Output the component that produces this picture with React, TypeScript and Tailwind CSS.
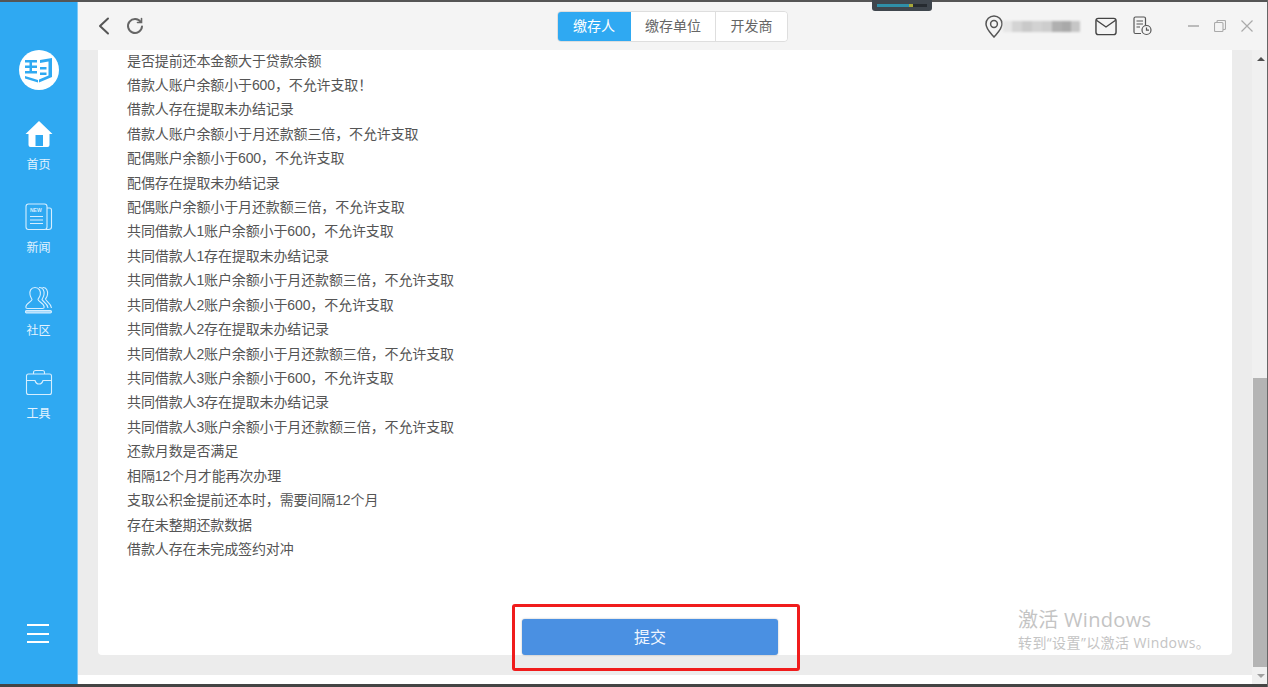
const font = "font-['Liberation_Sans','Noto_Sans_CJK_SC',sans-serif]";

const rules = [
  "是否提前还本金额大于贷款余额",
  "借款人账户余额小于600，不允许支取！",
  "借款人存在提取未办结记录",
  "借款人账户余额小于月还款额三倍，不允许支取",
  "配偶账户余额小于600，不允许支取",
  "配偶存在提取未办结记录",
  "配偶账户余额小于月还款额三倍，不允许支取",
  "共同借款人1账户余额小于600，不允许支取",
  "共同借款人1存在提取未办结记录",
  "共同借款人1账户余额小于月还款额三倍，不允许支取",
  "共同借款人2账户余额小于600，不允许支取",
  "共同借款人2存在提取未办结记录",
  "共同借款人2账户余额小于月还款额三倍，不允许支取",
  "共同借款人3账户余额小于600，不允许支取",
  "共同借款人3存在提取未办结记录",
  "共同借款人3账户余额小于月还款额三倍，不允许支取",
  "还款月数是否满足",
  "相隔12个月才能再次办理",
  "支取公积金提前还本时，需要间隔12个月",
  "存在未整期还款数据",
  "借款人存在未完成签约对冲",
];

function HomeIcon() {
  return (
    <svg width="28" height="28" viewBox="0 0 28 28" fill="#fff" fillRule="evenodd">
      <path d="M14 1 L27.5 14 L24.5 14 L24.5 25 Q24.5 27 22.5 27 L5.5 27 Q3.5 27 3.5 25 L3.5 14 L0.5 14 Z M10.5 15 L10.5 26 L18 26 L18 15 Z" />
    </svg>
  );
}

function NewsIcon() {
  return (
    <svg width="28" height="28" viewBox="0 0 28 28" fill="none" stroke="#d6eeff" strokeWidth="1.1">
      <rect x="1" y="1" width="21" height="25.5" rx="2.5" />
      <path d="M22 5 h2.5 q2 0 2 2 v17 q0 2.5 -3 2.5 h-3" />
      <path d="M5 13.5 h13 M5 17 h13 M5 20.5 h13" />
      <text x="5" y="9" fontSize="5" fontWeight="700" fill="#d6eeff" stroke="none" fontFamily="Liberation Sans">NEW</text>
    </svg>
  );
}

function PeopleIcon() {
  return (
    <svg width="28" height="28" viewBox="0 0 28 28" fill="none" stroke="#d6eeff" strokeWidth="1.1">
      <path d="M10 1.5 C5.5 1.5 4.5 5.5 5 8.5 C5.3 11 6.5 12 7 13.5 C7 15.5 1 17 0.8 21 Q0.8 22.5 2.5 22.5 L17.5 22.5 Q19.2 22.5 19.2 21 C19 17 13 15.5 13 13.5 C13.5 12 15 11 15.3 8.5 C15.8 5.5 14.5 1.5 10 1.5 Z" />
      <path d="M14 1.5 C18 1 19.5 5 19 8.5 C18.7 11 17.5 12 17 13.5 C17.5 15.5 22.5 17 23 22" />
      <path d="M17.5 1.5 C21.5 1 23 5 22.5 8.5 C22.2 11 21 12 20.5 13 C21 15.5 26 17 26.5 22" />
      <rect x="0.5" y="24.5" width="26" height="2.5" rx="1.25" fill="#d6eeff" fillOpacity="0.7" />
    </svg>
  );
}

function CaseIcon() {
  return (
    <svg width="28" height="28" viewBox="0 0 28 28" fill="none" stroke="#d6eeff" strokeWidth="1.1">
      <rect x="1.5" y="5" width="25" height="20.5" rx="2" />
      <path d="M8.5 5 V3.5 Q8.5 1.5 10.5 1.5 H17.5 Q19.5 1.5 19.5 3.5 V5" />
      <path d="M1.5 11.5 H10 Q11 15 14 15 Q17 15 18 11.5 H26.5" />
    </svg>
  );
}

function NavItem({ icon, label }: { icon: React.ReactNode; label: string }) {
  return (
    <div className="flex h-[83px] flex-col items-center">
      <div className="flex h-[28px] items-center justify-center">{icon}</div>
      <span className="mt-[9px] text-[12px] leading-[16px] text-[#e3f3ff]">{label}</span>
    </div>
  );
}

function Sidebar() {
  return (
    <aside className="flex w-[78px] shrink-0 flex-col items-center border-r border-[#7cc8f6] bg-[#2fa9f2]">
      {/* logo */}
      <div className="mt-[48px] flex h-[40px] w-[40px] items-center justify-center rounded-full bg-white">
        <svg width="29" height="26" viewBox="0 0 29 26" fill="#2fa9f2">
          <path d="M1 3 H13 V5.5 H1 Z M1 8.5 H13 V11 H1 Z M1 14 H13 V16.5 H1 Z M5.5 3 H8 V16.5 H5.5 Z" />
          <path d="M1 19 L14 23 L14 25.5 L1 21.5 Z" />
          <path d="M16 3 L28 1 V20 L15 25.5 V22.5 L24.5 18.5 V4.5 L16 6 Z M16 10 H22.5 V12.5 H16 Z M16 15.5 H22.5 V18 H16 Z" />
        </svg>
      </div>
      <div className="mt-[30px] flex flex-col">
        <NavItem icon={<HomeIcon />} label="首页" />
        <NavItem icon={<NewsIcon />} label="新闻" />
        <NavItem icon={<PeopleIcon />} label="社区" />
        <NavItem icon={<CaseIcon />} label="工具" />
      </div>
      <div className="mt-auto mr-[2px] mb-[41px] flex w-[22px] flex-col gap-[6.5px]">
        <div className="h-[2px] bg-white" />
        <div className="h-[2px] bg-white" />
        <div className="h-[2px] bg-white" />
      </div>
    </aside>
  );
}

function Header() {
  return (
    <header className="flex h-[48px] shrink-0 items-center bg-[#f4f4f4] pl-[19px]">
      <svg width="14" height="18" viewBox="0 0 14 18" fill="none" stroke="#555" strokeWidth="2" strokeLinecap="round" strokeLinejoin="round">
        <path d="M11 1.5 L3 9 L11 16.5" />
      </svg>
      <svg className="ml-[15px]" width="18" height="18" viewBox="0 0 18 18" fill="none" stroke="#666" strokeWidth="2" strokeLinecap="round">
        <path d="M14.8 5 A7 7 0 1 0 16 9.5" />
        <path d="M15.5 1.5 V5.5 H11.5" strokeWidth="1.6" />
      </svg>

      <div className="ml-[413px] flex h-[31px] overflow-hidden rounded-[4px] border border-[#dedede] text-[14px] text-[#666]">
        <div className="-m-px flex w-[74px] items-center justify-center bg-[#2fa9f2] text-white">缴存人</div>
        <div className="ml-px flex w-[85px] items-center justify-center border-r border-[#dedede] bg-white">缴存单位</div>
        <div className="flex w-[71px] items-center justify-center bg-white">开发商</div>
      </div>

      {/* location, name is blurred out */}
      <svg className="ml-[197px]" width="18" height="23" viewBox="0 0 18 23" fill="none" stroke="#555" strokeWidth="1.5">
        <path d="M9 1 C4.5 1 1 4.5 1 9 C1 14 6 18.5 9 22 C12 18.5 17 14 17 9 C17 4.5 13.5 1 9 1 Z" />
        <circle cx="9" cy="9" r="3.4" />
      </svg>
      <div className="flex h-[11px] items-stretch blur-[1px]">
        <div className="w-[9px] bg-[#e6e6e6]" />
        <div className="w-[10px] bg-[#d4d4d4]" />
        <div className="w-[10px] bg-[#c9c9c9]" />
        <div className="w-[10px] bg-[#d2d2d2]" />
        <div className="w-[10px] bg-[#cdcdcd]" />
        <div className="w-[10px] bg-[#b0b0b0]" />
        <div className="w-[9px] bg-[#a9a9a9]" />
        <div className="w-[9px] bg-[#c6c6c6]" />
      </div>
      <svg className="ml-[15px]" width="22" height="19" viewBox="0 0 23 19" fill="none" stroke="#444" strokeWidth="1.5">
        <rect x="1" y="1" width="21" height="17" rx="2.5" />
        <path d="M1.5 3 L11.5 10 L21.5 3" />
      </svg>
      <svg className="ml-[16px]" width="19" height="20" viewBox="0 0 19 20" fill="none" stroke="#555" strokeWidth="1.2">
        <path d="M8 17.5 H2.5 Q1 17.5 1 16 V2.5 Q1 1 2.5 1 H11 Q12.5 1 12.5 2.5 V9" />
        <path d="M3.5 5 H10 M3.5 8 H10 M3.5 11 H7" />
        <circle cx="13.5" cy="14" r="4.5" />
        <path d="M13.5 11.5 V14.2 H16" />
      </svg>
      <div className="ml-[36px] h-[1.5px] w-[11px] bg-[#bbb]" />
      <svg className="ml-[15px]" width="12" height="12" viewBox="0 0 12 12" fill="none" stroke="#aaa" strokeWidth="1.1">
        <rect x="0.5" y="2.5" width="8.5" height="9" rx="1" />
        <path d="M3 2.5 V1.5 Q3 0.5 4 0.5 H10.5 Q11.5 0.5 11.5 1.5 V8.5 Q11.5 9.5 10.5 9.5 H9" />
      </svg>
      <svg className="ml-[15px]" width="12" height="12" viewBox="0 0 12 12" fill="none" stroke="#aaa" strokeWidth="1.2">
        <path d="M0.5 0.5 L11.5 11.5 M11.5 0.5 L0.5 11.5" />
      </svg>
    </header>
  );
}

function Scrollbar() {
  return (
    <div className="flex w-[16px] shrink-0 flex-col bg-[#f0f0f0] pl-px">
      <div className="flex h-[17px] items-center justify-center">
        <div className="h-0 w-0 border-x-[4px] border-b-[4px] border-x-transparent border-b-[#505050]" />
      </div>
      <div className="mt-[311px] w-full flex-1 bg-[#b4b4b4]" />
      <div className="flex h-[17px] items-center justify-center">
        <div className="h-0 w-0 border-x-[4px] border-t-[4px] border-x-transparent border-t-[#a0a0a0]" />
      </div>
    </div>
  );
}

export default function App() {
  return (
    <div className={`${font} relative flex h-[687px] w-[1268px] flex-col overflow-hidden bg-white`}>
      <div className="h-[2px] shrink-0 bg-[#555]" />
      <div className="flex min-h-0 flex-1">
        <Sidebar />
        <main className="flex min-w-0 flex-1 flex-col">
          <Header />
          <div className="flex min-h-0 flex-1">
            <div className="flex min-w-0 flex-1 flex-col">
              <div className="flex h-[625px] shrink-0 bg-[#ececec] px-[20px] pb-[20px]">
                <section className="flex flex-1 flex-col rounded-b-[4px] bg-white pl-[29px]">
                  <ul className="-mt-px flex flex-col">
                    {rules.map((r) => (
                      <li key={r} className="h-[24.43px] pt-[0.5px] text-[14px] leading-[22px] tracking-[-0.12px] whitespace-nowrap text-[#555]">
                        {r}
                      </li>
                    ))}
                  </ul>
                </section>
              </div>
            </div>
            <Scrollbar />
          </div>
        </main>
      </div>
      <div className="h-[3px] shrink-0 bg-[#444]" />

      {/* submit button sits across the card edge */}
      <button className="absolute top-[619px] left-[522px] flex h-[36px] w-[256px] items-center justify-center rounded-[3px] bg-[#4a90e2] pt-[2px] text-[16px] text-[#f0f6ff] shadow-[0_0_2px_rgba(0,0,0,0.3)]">
        提交
      </button>
      {/* red annotation box */}
      <div className="absolute top-[604px] left-[512px] h-[67px] w-[288px] rounded-[3px] border-[3px] border-[#f01c1c]" />

      {/* device notch at the top */}
      <div className="absolute top-0 left-[872px] flex h-[11px] w-[60px] items-center rounded-b-[3px] bg-[#3f464d] px-[5px]">
        <div className="h-[3px] w-[32px] bg-[#2f8fa8]" />
        <div className="h-[3px] w-[4px] bg-[#a8a83a]" />
        <div className="h-[3px] flex-1 bg-[#262b30]" />
      </div>
      <div className="absolute top-0 right-0 h-[687px] w-px bg-[#666]" />

      {/* windows watermark */}
      <div className="absolute top-[607px] left-[1018px] font-['Open_Sans','Noto_Sans_CJK_SC',sans-serif] whitespace-nowrap text-[#c4c4c4]">
        <div className="text-[20px] leading-[26px] tracking-[0.3px]">激活 Windows</div>
        <div className="text-[14px] leading-[20px] tracking-[0.4px]">转到“设置”以激活 Windows。</div>
      </div>
    </div>
  );
}
